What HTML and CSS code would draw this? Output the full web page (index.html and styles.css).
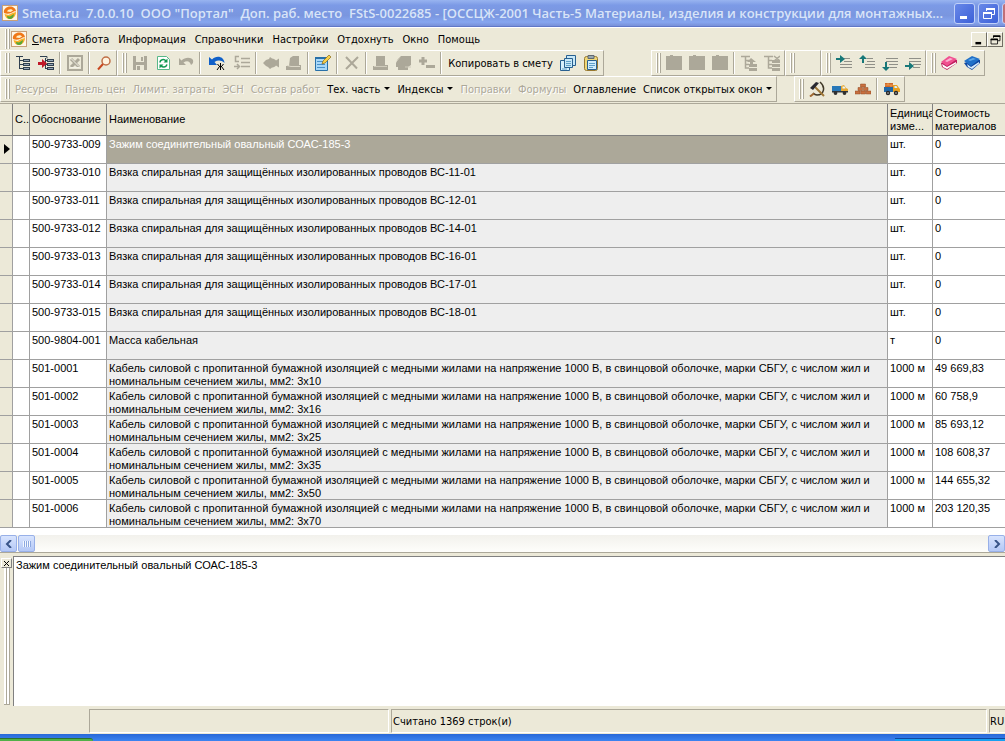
FILE: index.html
```html
<!DOCTYPE html>
<html lang="ru">

<head>
    <meta charset="UTF-8">
    <meta name="viewport" content="width=device-width, initial-scale=1.0">
    <title>Smeta.ru</title>
    <link rel="stylesheet" href="styles.css">
</head>

<body>
    <svg class="sprite" aria-hidden="true">
        <symbol id="i-logo" viewBox="0 0 16 16">
            <rect x="0.5" y="0.5" width="15" height="15" fill="#fdf6e8" stroke="#c8a078"/>
            <path d="M2 8C1 4 5 1.500 8 1.500s6 2 6 5c-2-1-3 .5-5 1.500s-5 1-7 0z" fill="#f07818"/>
            <path d="M5 6.500C6 4 9.500 3.500 11 5.500L8.500 7z" fill="#fff0c8"/>
            <path d="M2.500 9l4 1 4-2 3.500-1c0 4-3 7-6 7s-5-2-5.500-5z" fill="#f8b028"/>
            <path d="M5 11l3 .5 4-2.500c0 3-2 5-4 5s-3-1-3-3z" fill="#58a838"/>
        </symbol>
        <symbol id="i-tree" viewBox="0 0 16 16">
            <path d="M1 1.500h7M4.500 2v12M5 5.500h3M5 9.500h3M5 13.500h3" stroke="#304050" fill="none"/>
            <path d="M8 4h7v3H8zM8 8h7v3H8zM8 12h7v3H8z" fill="#304050"/>
            <path d="M9 5.500h5M9 9.500h5M9 13.500h5" stroke="#98a8b8"/>
        </symbol>
        <symbol id="i-tree-in" viewBox="0 0 16 16">
            <path d="M2 1.500h7v2M7.500 5.500h2M7.500 9.500h2M7.500 13.500h2M7.500 3v11" stroke="#304050" fill="none"/>
            <path d="M9 4h7v3H9zM9 8h7v3H9zM9 12h7v3H9z" fill="#304050"/>
            <path d="M10 5.500h5M10 9.500h5M10 13.500h5" stroke="#98a8b8"/>
            <path d="M0 7h4V4l5 4.500L4 13v-3H0z" fill="#c01828"/>
        </symbol>
        <symbol id="i-excel" viewBox="0 0 16 16">
            <rect x="1" y="1" width="14" height="14" fill="none" stroke="#aca899" stroke-width="2"/>
            <path d="M4 4l8 8M12 4l-8 8" stroke="#aca899" stroke-width="3"/>
            <path d="M4 3.500l8 8M3.500 12.500h9" stroke="#f4f2e8"/>
        </symbol>
        <symbol id="i-find" viewBox="0 0 16 16">
            <circle cx="10" cy="6" r="4" fill="#fff4e0" stroke="#c07048" stroke-width="1.500"/>
            <path d="M7 9l-5 5.500" stroke="#c84820" stroke-width="2"/>
        </symbol>
        <symbol id="i-save" viewBox="0 0 16 16">
            <path d="M1 1h14v14H1z" fill="#aca899"/>
            <path d="M4 1h8v6H4zM4 10h8v5H4z" fill="#ece9d8"/>
            <path d="M9 2h2v4H9zM5 11h3v4H5z" fill="#aca899"/>
        </symbol>
        <symbol id="i-refresh" viewBox="0 0 16 16">
            <path d="M2.500 1.500h9l3 3v10h-12z" fill="#fff" stroke="#58b888"/>
            <path d="M5 7.500c0-3 4-4 6-1.500M12 9.500c-1 3-4.500 3.500-6 1" stroke="#109850" stroke-width="1.500" fill="none"/>
            <path d="M12.500 3.500v4h-4zM4.500 13.500v-4h4z" fill="#109850"/>
        </symbol>
        <symbol id="i-undo-off" viewBox="0 0 16 16">
            <path d="M1 3v7h7L5.500 7.500C9 5 12 6 13 10c2-1 2.500-3 2-5-2-3-8-3-11.500.5z" fill="#aca899"/>
        </symbol>
        <symbol id="i-undo" viewBox="0 0 16 16">
            <path d="M0 2v8h8L5.500 7C9 5 12 5 15.500 8 15 1 7 0 3 4.500z" fill="#1060c8"/>
            <path d="M11.500 8v7M8.500 9l2 2.500L8 15M14.500 9l-2 2.500L15 15M10 11.500h3" stroke="#000" fill="none"/>
        </symbol>
        <symbol id="i-cbr" viewBox="0 0 16 16">
            <path d="M5 1.500H1.500v5H5M7 3.500h9M7 7.500h9M7 11.500h9M0 11.500h5M3 9l2.500 2.500L3 14" stroke="#aca899" stroke-width="1.500" fill="none"/>
        </symbol>
        <symbol id="i-fish" viewBox="0 0 16 16">
            <path d="M0 8l3-3 3-1 1-2 2 1.500c2 0 3 1 4 2l3-2v9l-3-2c-1 1.500-3 2-4 2L7 14l-2-2-2-1z" fill="#aca899"/>
        </symbol>
        <symbol id="i-hat" viewBox="0 0 16 16">
            <path d="M4 3l3-2h6v9h2v5H0v-4h3z" fill="#aca899"/>
            <path d="M1 10.500l4 1h9" stroke="#dcd8c8" fill="none"/>
        </symbol>
        <symbol id="i-edit" viewBox="0 0 16 16">
            <path d="M.5 2.500h12v13H.5z" fill="#a8d8f8" stroke="#2870a8"/>
            <path d="M0 2h13v2H0z" fill="#2870a8"/>
            <path d="M2 6.500h6M2 9.500h8M2 12.500h8" stroke="#4890c8"/>
            <path d="M7 9l1-3 6-6 2 2-6 6z" fill="#f8d048" stroke="#886818" stroke-width=".7"/>
        </symbol>
        <symbol id="i-del" viewBox="0 0 16 16">
            <path d="M2 2l11 11.500M14 2L2 14" stroke="#aca899" stroke-width="2" fill="none"/>
        </symbol>
        <symbol id="i-press" viewBox="0 0 16 16">
            <path d="M3 1h9v9h3v5H0v-4h3z" fill="#aca899"/>
            <path d="M1 11.500h13" stroke="#d0ccbc"/>
        </symbol>
        <symbol id="i-hand" viewBox="0 0 16 16">
            <path d="M5 1h10v9l-3 2v3H2v-3H0V8l2-4z" fill="#aca899"/>
            <path d="M1 6l3-4M9 12h6" stroke="#d0ccbc"/>
        </symbol>
        <symbol id="i-plusminus" viewBox="0 0 16 16">
            <path d="M0 6h8M4 2v8M7 11.500h9" stroke="#aca899" stroke-width="3"/>
        </symbol>
        <symbol id="i-copy" viewBox="0 0 16 16">
            <path d="M6.500.5h9v10h-9z" fill="#c8e8f8" stroke="#286090"/>
            <path d="M.5 5.500h9v10h-9z" fill="#d8f0fc" stroke="#286090"/>
            <path d="M4.500 3.500h8v9h-8z" fill="#c8e8f8" stroke="#286090"/>
            <path d="M6 6.500h5M6 8.500h5M6 10.500h5M2 14h5" stroke="#60a0c8"/>
        </symbol>
        <symbol id="i-paste" viewBox="0 0 16 16">
            <rect x="1.500" y="1.500" width="13" height="14" rx="2" fill="#f0d878" stroke="#987830"/>
            <path d="M5 .5h6v3H5z" fill="#98a8b0" stroke="#606870"/>
            <path d="M4.500 5.500h9v9h-9z" fill="#d0ecfc" stroke="#286090"/>
            <path d="M6 8.500h6M6 10.500h6M6 12.500h4" stroke="#60a0c8"/>
        </symbol>
        <symbol id="i-block" viewBox="0 0 16 16">
            <path d="M0 1h4V0h3v1h9v14H0z" fill="#aca899"/>
        </symbol>
        <symbol id="i-tree-up" viewBox="0 0 16 16">
            <path d="M0 1.500h9M4.500 2v11H8M5 9.500h3M5 5.500h3" stroke="#aca899" stroke-width="1.500" fill="none"/>
            <path d="M10 3l-4 4h3v2h3V7h3zM8 9h8v3H8zM8 13h8v3H8z" fill="#aca899"/>
        </symbol>
        <symbol id="i-tree-x" viewBox="0 0 16 16">
            <path d="M0 1.500h9M4.500 2v11H8M5 9.500h3M5 5.500h3M10 1l6 5M16 1l-6 5" stroke="#aca899" stroke-width="1.500" fill="none"/>
            <path d="M8 5h8v3H8zM8 9h8v3H8zM8 13h8v3H8z" fill="#aca899"/>
        </symbol>
        <symbol id="i-ind1" viewBox="0 0 16 16">
            <path d="M8 3.500h6M8 6.500h8M4 9.500h12M4 12.500h12" stroke="#909088"/>
            <path d="M0 3h4V0l5 4-5 4V5H0z" fill="#187878"/>
        </symbol>
        <symbol id="i-ind2" viewBox="0 0 16 16">
            <path d="M8 3.500h6M8 6.500h8M6 9.500h10M6 12.500h10" stroke="#909088"/>
            <path d="M3 8V4H0l4-4 4 4H5v4z" fill="#187878"/>
        </symbol>
        <symbol id="i-ind3" viewBox="0 0 16 16">
            <path d="M4 3.500h12M4 6.500h12M7 9.500h9M8 12.500h7" stroke="#909088"/>
            <path d="M3 7v5H0l4 4 4-4H5V7z" fill="#187878"/>
        </symbol>
        <symbol id="i-ind4" viewBox="0 0 16 16">
            <path d="M4 3.500h12M4 6.500h12M8 9.500h8M8 12.500h7" stroke="#909088"/>
            <path d="M0 10h4V7l5 4-5 4v-3H0z" fill="#187878"/>
        </symbol>
        <symbol id="i-book-pink" viewBox="0 0 16 16">
            <path d="M0 8l10-3 6 0v3L6 15 1 12z" fill="#c02060"/>
            <path d="M1 9l5 3 9-5v1.500L6 14l-4-2z" fill="#fff"/>
            <path d="M0 7l8-6 8 3-10 7z" fill="#f05090"/>
            <path d="M4 6l5-3 3 1-6 3z" fill="#fcb0d0"/>
        </symbol>
        <symbol id="i-book-blue" viewBox="0 0 16 16">
            <path d="M0 8l10-3 6 0v3L8 15 3 12z" fill="#1048a0"/>
            <path d="M3 9l4 3 8-5v1.500L8 14l-4-2z" fill="#d8ecfc"/>
            <path d="M0 6l8-5 8 3-9 7z" fill="#2070c8"/>
            <path d="M4 5l5-2 3 1-6 2z" fill="#60a8e8"/>
        </symbol>
        <symbol id="i-sickle" viewBox="0 0 16 16">
            <path d="M11 1c6 5 4 13-3 13-2 0-3-1-4-2" stroke="#403828" stroke-width="1.500" fill="none"/>
            <path d="M5 12.500L1 15.500" stroke="#a06830" stroke-width="2"/>
            <path d="M5 5l10 10" stroke="#a07838" stroke-width="2"/>
            <path d="M1 7l6-6 3 1-6 7z" fill="#282830"/>
        </symbol>
        <symbol id="i-truck" viewBox="0 0 16 16">
            <path d="M0 5h9v5H0z" fill="#2878b8"/>
            <path d="M9 5l3-1 2 3 2 1v3H9z" fill="#e8a830"/>
            <path d="M10.500 5.500h2l1 2h-3z" fill="#e8f4fc"/>
            <path d="M0 10h16v1.500H0z" fill="#303840"/>
            <circle cx="3.500" cy="12" r="1.900" fill="#303030"/>
            <circle cx="12.500" cy="12" r="1.900" fill="#303030"/>
        </symbol>
        <symbol id="i-bricks" viewBox="0 0 16 16">
            <path d="M5.500 3h5v3h-5zM3 6.500h4.500v3H3zM8.500 6.500H13v3H8.500zM0 10h5v3H0zM5.700 10h4.800v3H5.700zM11.200 10H16v3h-4.800z" fill="#c87040" stroke="#904820" stroke-width=".5"/>
        </symbol>
        <symbol id="i-truck-full" viewBox="0 0 16 16">
            <path d="M1 2h8v4H1z" fill="#d06828"/>
            <path d="M1 4h8M4 2v2M7 4v2" stroke="#f8b060" stroke-width=".7"/>
            <path d="M0 6h9v5H0z" fill="#2068a8"/>
            <path d="M9 4h4l2 3 1 1v3H9z" fill="#e8a020"/>
            <path d="M10.500 5h2l1 2h-3z" fill="#d8f0fc"/>
            <circle cx="4" cy="12" r="2.200" fill="#282828"/>
            <circle cx="12" cy="12" r="2.200" fill="#282828"/>
            <circle cx="4" cy="12" r=".8" fill="#c8c8c8"/>
            <circle cx="12" cy="12" r=".8" fill="#c8c8c8"/>
        </symbol>
        <symbol id="i-min" viewBox="0 0 16 16">
            <path d="M3 11h7v3H3z" fill="currentColor"/>
        </symbol>
        <symbol id="i-restore" viewBox="0 0 16 16">
            <path d="M5.500 6V3.500h8v6H11M2.500 7.500h8v6h-8z" fill="none" stroke="currentColor"/>
            <path d="M5 3h9v2H5zM2 7h9v2H2z" fill="currentColor"/>
        </symbol>
    </svg>

    <header class="titlebar">
        <svg class="icon"><use href="#i-logo"/></svg>
        <h1 class="title">Smeta.ru  7.0.0.10  ООО "Портал"  Доп. раб. место  FStS-0022685 - [ОССЦЖ-2001 Часть-5 Материалы, изделия и конструкции для монтажных...</h1>
        <div class="window-buttons">
            <button class="win-btn" aria-label="Свернуть"><svg class="icon"><use href="#i-min"/></svg></button>
            <button class="win-btn" aria-label="Восстановить"><svg class="icon"><use href="#i-restore"/></svg></button>
            <button class="win-btn close" aria-label="Закрыть"></button>
        </div>
    </header>

    <nav class="menubar">
        <span class="handle"></span>
        <svg class="icon"><use href="#i-logo"/></svg>
        <button class="menu-item"><u>С</u>мета</button>
        <button class="menu-item">Работа</button>
        <button class="menu-item">Информация</button>
        <button class="menu-item">Справочники</button>
        <button class="menu-item">Настройки</button>
        <button class="menu-item">Отдохнуть</button>
        <button class="menu-item">Окно</button>
        <button class="menu-item">Помощь</button>
        <div class="child-buttons">
            <button class="child-btn" aria-label="Свернуть окно"><svg class="icon"><use href="#i-min"/></svg></button>
            <button class="child-btn" aria-label="Восстановить окно"><svg class="icon"><use href="#i-restore"/></svg></button>
        </div>
    </nav>

    <div class="toolbar-row">
        <div class="toolbar">
            <span class="handle"></span>
            <button class="tool" aria-label="Дерево"><svg class="icon"><use href="#i-tree"/></svg></button>
            <button class="tool" aria-label="Вставить в дерево"><svg class="icon"><use href="#i-tree-in"/></svg></button>
            <span class="sep"></span>
            <button class="tool" aria-label="Excel" disabled><svg class="icon"><use href="#i-excel"/></svg></button>
            <span class="sep"></span>
            <button class="tool" aria-label="Найти"><svg class="icon"><use href="#i-find"/></svg></button>
        </div>
        <div class="toolbar">
            <span class="handle"></span>
            <button class="tool" aria-label="Сохранить" disabled><svg class="icon"><use href="#i-save"/></svg></button>
            <button class="tool" aria-label="Обновить"><svg class="icon"><use href="#i-refresh"/></svg></button>
            <button class="tool" aria-label="Отменить" disabled><svg class="icon"><use href="#i-undo-off"/></svg></button>
            <span class="sep"></span>
            <button class="tool wide" aria-label="Журнал отмены"><svg class="icon"><use href="#i-undo"/></svg></button>
            <button class="tool" aria-label="Строка" disabled><svg class="icon"><use href="#i-cbr"/></svg></button>
            <span class="sep"></span>
            <button class="tool" aria-label="Материалы" disabled><svg class="icon"><use href="#i-fish"/></svg></button>
            <button class="tool" aria-label="Машины" disabled><svg class="icon"><use href="#i-hat"/></svg></button>
            <span class="sep"></span>
            <button class="tool" aria-label="Изменить"><svg class="icon"><use href="#i-edit"/></svg></button>
            <span class="sep"></span>
            <button class="tool" aria-label="Удалить" disabled><svg class="icon"><use href="#i-del"/></svg></button>
            <span class="sep"></span>
            <button class="tool" aria-label="Группа" disabled><svg class="icon"><use href="#i-press"/></svg></button>
            <button class="tool" aria-label="Выбор" disabled><svg class="icon"><use href="#i-hand"/></svg></button>
            <button class="tool" aria-label="Плюс минус" disabled><svg class="icon"><use href="#i-plusminus"/></svg></button>
            <span class="sep"></span>
            <button class="text-tool copy-text">Копировать в смету</button>
            <button class="tool" aria-label="Копировать"><svg class="icon"><use href="#i-copy"/></svg></button>
            <button class="tool" aria-label="Вставить"><svg class="icon"><use href="#i-paste"/></svg></button>
        </div>
        <div class="toolbar levels">
            <span class="handle"></span>
            <button class="tool" aria-label="Уровень 1" disabled><svg class="icon"><use href="#i-block"/></svg></button>
            <button class="tool" aria-label="Уровень 2" disabled><svg class="icon"><use href="#i-block"/></svg></button>
            <button class="tool" aria-label="Уровень 3" disabled><svg class="icon"><use href="#i-block"/></svg></button>
            <span class="sep"></span>
            <button class="tool" aria-label="Поднять" disabled><svg class="icon"><use href="#i-tree-up"/></svg></button>
            <button class="tool" aria-label="Убрать" disabled><svg class="icon"><use href="#i-tree-x"/></svg></button>
        </div>
        <div class="toolbar empty">
            <span class="handle"></span>
        </div>
        <div class="toolbar">
            <span class="handle"></span>
            <button class="tool" aria-label="Вправо сверху"><svg class="icon"><use href="#i-ind1"/></svg></button>
            <button class="tool" aria-label="Вверх"><svg class="icon"><use href="#i-ind2"/></svg></button>
            <button class="tool" aria-label="Вниз"><svg class="icon"><use href="#i-ind3"/></svg></button>
            <button class="tool" aria-label="Вправо снизу"><svg class="icon"><use href="#i-ind4"/></svg></button>
        </div>
        <div class="toolbar">
            <span class="handle"></span>
            <button class="tool" aria-label="Розовая книга"><svg class="icon"><use href="#i-book-pink"/></svg></button>
            <button class="tool" aria-label="Синяя книга"><svg class="icon"><use href="#i-book-blue"/></svg></button>
        </div>
    </div>

    <div class="toolbar-row">
        <div class="toolbar">
            <span class="handle"></span>
            <button class="text-tool" disabled>Ресурсы</button>
            <button class="text-tool" disabled>Панель цен</button>
            <button class="text-tool" disabled>Лимит. затраты</button>
            <button class="text-tool" disabled>ЭСН</button>
            <button class="text-tool" disabled>Состав работ</button>
            <button class="text-tool drop">Тех. часть</button>
            <button class="text-tool drop">Индексы</button>
            <button class="text-tool" disabled>Поправки</button>
            <button class="text-tool" disabled>Формулы</button>
            <button class="text-tool">Оглавление</button>
            <button class="text-tool drop">Список открытых окон</button>
        </div>
        <div class="toolbar kinds">
            <span class="handle"></span>
            <button class="tool" aria-label="Труд"><svg class="icon"><use href="#i-sickle"/></svg></button>
            <button class="tool" aria-label="Транспорт"><svg class="icon"><use href="#i-truck"/></svg></button>
            <button class="tool" aria-label="Кирпич"><svg class="icon"><use href="#i-bricks"/></svg></button>
            <span class="sep"></span>
            <button class="tool" aria-label="Перевозка"><svg class="icon"><use href="#i-truck-full"/></svg></button>
        </div>
    </div>

    <main class="grid-box">
        <table class="grid">
            <colgroup>
                <col class="c-mark">
                <col class="c-state">
                <col class="c-code">
                <col>
                <col class="c-unit">
                <col class="c-cost">
            </colgroup>
            <thead>
                <tr>
                    <th></th>
                    <th>С..</th>
                    <th>Обоснование</th>
                    <th>Наименование</th>
                    <th>Единица изме...</th>
                    <th>Стоимость материалов</th>
                </tr>
            </thead>
            <tbody id="rows"></tbody>
        </table>
        <div class="hscroll">
            <button class="scroll-btn" aria-label="Влево"><svg class="arrow" viewBox="0 0 8 8"><path d="M6 0L2 4l4 4"/></svg></button>
            <div class="thumb"></div>
            <button class="scroll-btn right" aria-label="Вправо"><svg class="arrow" viewBox="0 0 8 8"><path d="M2 0l4 4-4 4"/></svg></button>
        </div>
    </main>

    <section class="memo">
        <div class="memo-side">
            <button class="memo-close" aria-label="Закрыть панель"><svg viewBox="0 0 7 7"><path d="M1 1l5 5M6 1L1 6"/></svg></button>
            <span class="memo-grip"></span>
        </div>
        <textarea class="memo-text" aria-label="Наименование" spellcheck="false">Зажим соединительный овальный СОАС-185-3</textarea>
    </section>

    <footer class="statusbar">
        <div class="status first"></div>
        <div class="status middle">Считано 1369 строк(и)</div>
        <div class="status lang">RU</div>
    </footer>
    <div class="taskbar">
        <div class="start"></div>
        <div class="tray"></div>
    </div>

    <script>
        const clamp = n => "Вязка спиральная для защищённых изолированных проводов ВС-" + n + "-01";
        const cable = n => "Кабель силовой с пропитанной бумажной изоляцией с медными жилами на напряжение 1000 В, в свинцовой оболочке, марки СБГУ, с числом жил и номинальным сечением жилы, мм2: 3х" + n;

        const rows = [
            ["500-9733-009", "Зажим соединительный овальный СОАС-185-3", "шт.", "0"],
            ["500-9733-010", clamp(11), "шт.", "0"],
            ["500-9733-011", clamp(12), "шт.", "0"],
            ["500-9733-012", clamp(14), "шт.", "0"],
            ["500-9733-013", clamp(16), "шт.", "0"],
            ["500-9733-014", clamp(17), "шт.", "0"],
            ["500-9733-015", clamp(18), "шт.", "0"],
            ["500-9804-001", "Масса кабельная", "т", "0"],
            ["501-0001", cable(10), "1000 м", "49 669,83"],
            ["501-0002", cable(16), "1000 м", "60 758,9"],
            ["501-0003", cable(25), "1000 м", "85 693,12"],
            ["501-0004", cable(35), "1000 м", "108 608,37"],
            ["501-0005", cable(50), "1000 м", "144 655,32"],
            ["501-0006", cable(70), "1000 м", "203 120,35"]
        ];

        const tbody = document.getElementById("rows");
        rows.forEach((row, i) => {
            const tr = tbody.insertRow();
            if (i === 0) tr.className = "selected";
            ["", "", ...row].forEach(text => {
                const box = document.createElement("div");
                box.className = "cell";
                box.textContent = text;
                tr.insertCell().appendChild(box);
            });
        });
    </script>
</body>

</html>
```
FILE: styles.css
```css
* {
    box-sizing: border-box;
}

body {
    margin: 0;
    min-height: 100vh;
    display: flex;
    flex-direction: column;
    overflow: hidden;
    background-color: #ece9d8;
    color: #000;
    font-family: "DejaVu Sans Condensed", "DejaVu Sans", sans-serif;
    font-size: 11px;
    line-height: 13px;
}

button {
    flex: none;
    margin: 0;
    padding: 0;
    border: none;
    background: none;
    color: inherit;
    font: inherit;
    white-space: nowrap;
}

.sprite {
    position: absolute;
    width: 0;
    height: 0;
}

.icon {
    display: block;
    flex: none;
    width: 16px;
    height: 16px;
}

/* title */
.titlebar {
    display: flex;
    align-items: center;
    height: 27px;
    padding-left: 2px;
    border-bottom: 1px solid #6078c8;
    background: linear-gradient(#98b4f0, #7c9ae6 20%, #7a96df 60%, #86a6f0 85%, #7890d8);
    overflow: hidden;
}

.title {
    flex: 1;
    min-width: 0;
    margin: 0;
    padding-left: 4px;
    color: #d8e4f8;
    font-family: "Open Sans", sans-serif;
    font-size: 13px;
    font-weight: 600;
    line-height: 20px;
    white-space: pre;
    overflow: hidden;
}

.window-buttons {
    display: flex;
    gap: 3px;
    margin-right: -18px;
}

.win-btn {
    display: grid;
    place-items: center;
    width: 21px;
    height: 21px;
    border: 1px solid #c0d0f8;
    border-radius: 3px;
    background: linear-gradient(135deg, #6888e8, #3c60d8);
    color: #fff;
}

.win-btn.close {
    background: #c07078;
}

/* menu */
.menubar {
    display: flex;
    align-items: center;
    height: 23px;
    border-top: 1px solid #fff;
}

.handle {
    flex: none;
    width: 7px;
    height: 20px;
    margin-left: 4px;
    border: 1px solid transparent;
    border-width: 0 1px;
    background: linear-gradient(90deg, #fff 1px, #aca899 1px, #aca899 2px, transparent 2px, transparent 3px, #fff 3px, #fff 4px, #aca899 4px);
    background-clip: padding-box;
}

.menu-item {
    height: 20px;
    padding: 0 4px 0 5px;
}

.child-buttons {
    display: flex;
    margin-left: auto;
    padding-right: 2px;
}

.child-btn {
    display: grid;
    place-items: center;
    width: 16px;
    height: 15px;
    border: 1px solid;
    border-color: #fff #716f64 #716f64 #fff;
}

.child-btn .icon {
    width: 13px;
    height: 13px;
}

/* toolbars */
.toolbar-row {
    display: flex;
    height: 26px;
}

.toolbar {
    display: flex;
    flex: none;
    align-items: center;
    padding-right: 1px;
    border: 1px solid;
    border-color: #fff #aca899 #aca899 #fff;
}

.toolbar .handle {
    margin-left: 3px;
}

.levels {
    margin-left: 47px;
}

.kinds {
    margin-left: 17px;
}

.empty {
    width: 36px;
}

.tool {
    display: grid;
    place-items: center;
    width: 23px;
    height: 22px;
}

.tool.wide {
    width: 27px;
}

.sep {
    flex: none;
    width: 2px;
    height: 22px;
    margin: 0 2px;
    border-left: 1px solid #aca899;
    border-right: 1px solid #fff;
}

.text-tool {
    height: 22px;
    padding: 0 3px 0 4px;
}

.text-tool:disabled {
    color: #aca899;
    text-shadow: 1px 1px #fff;
}

.copy-text {
    width: 112px;
}

.drop::after {
    content: "";
    display: inline-block;
    margin-left: 4px;
    border: 3px solid transparent;
    border-top-color: #000;
    border-bottom: none;
    vertical-align: 3px;
}

/* grid */
.grid-box {
    margin-top: 1px;
    border-top: 1px solid #aca899;
    border-bottom: 1px solid #aca899;
    background-color: #fff;
}

.grid {
    width: 100%;
    table-layout: fixed;
    border-collapse: separate;
    border-spacing: 0;
    font-family: "Liberation Sans", Arial, sans-serif;
}

.c-mark {
    width: 13px;
}

.c-state {
    width: 17px;
}

.c-code {
    width: 77px;
}

.c-unit {
    width: 45px;
}

.c-cost {
    width: 72px;
}

.grid th {
    height: 32px;
    padding: 0 0 0 2px;
    border-right: 1px solid #808080;
    border-bottom: 1px solid #808080;
    background-color: #ece9d8;
    font-weight: normal;
    text-align: left;
    overflow: hidden;
}

.grid td {
    padding: 0;
    border-right: 1px solid #a0a0a0;
    border-bottom: 1px solid #a0a0a0;
    vertical-align: top;
}

.grid th:last-child,
.grid td:last-child {
    border-right: none;
}

.grid td:first-child {
    background-color: #ece9d8;
}

.grid td:nth-child(4) {
    background-color: #eee;
}

.cell {
    height: 27px;
    padding: 2px 0 0 2px;
    overflow: hidden;
}

.grid .selected td:nth-child(4) {
    background-color: #aca899;
    color: #fff;
}

.selected td:first-child .cell::before {
    content: "";
    display: block;
    width: 0;
    margin: 6px 0 0 2px;
    border: 5px solid transparent;
    border-left: 6px solid #000;
    border-right: none;
}

.hscroll {
    display: flex;
    height: 17px;
    margin-top: 7px;
    background: linear-gradient(#f2f1ec, #fefefb);
}

.scroll-btn,
.thumb {
    width: 17px;
    height: 17px;
    border: 1px solid #98b0e8;
    border-radius: 2px;
    background: linear-gradient(#d8e4fe, #b4c8f6);
}

.thumb {
    display: grid;
    place-items: center;
    margin-left: 1px;
}

.thumb::before {
    content: "";
    width: 8px;
    height: 6px;
    background: repeating-linear-gradient(90deg, #f4f8ff 0 1px, #8ca8e0 1px 2px);
}

.scroll-btn.right {
    margin-left: auto;
}

.arrow {
    display: block;
    width: 8px;
    height: 8px;
    margin: 0 auto;
    fill: none;
    stroke: #385488;
    stroke-width: 2;
}

/* memo */
.memo {
    display: flex;
    flex: 1;
    margin-top: 3px;
}

.memo-side {
    display: flex;
    flex-direction: column;
    align-items: center;
    width: 13px;
    padding-top: 2px;
}

.memo-close {
    width: 11px;
    height: 10px;
    border: 1px solid;
    border-color: #fff #808080 #808080 #fff;
}

.memo-close svg {
    display: block;
    width: 7px;
    height: 7px;
    margin: 0 auto;
    stroke: #000;
}

.memo-grip {
    flex: 1;
    width: 6px;
    margin-bottom: 1px;
    border-bottom: 1px solid #aca899;
    background: linear-gradient(90deg, #fff 2px, #aca899 2px, #aca899 3px, #fff 3px, #fff 5px, #aca899 5px);
}

.memo-text {
    flex: 1;
    padding: 2px;
    border: 1px solid #808080;
    border-right: none;
    border-bottom: none;
    outline: none;
    resize: none;
    background-color: #fff;
    font-family: "Liberation Sans", Arial, sans-serif;
    font-size: 11px;
    line-height: 13px;
}

/* status */
.statusbar {
    display: flex;
    gap: 2px;
    height: 28px;
    padding: 3px 0 1px 89px;
}

.status {
    padding-left: 1px;
    border: 1px solid;
    border-color: #aca899 #fff #fff #aca899;
    line-height: 24px;
    white-space: nowrap;
    overflow: hidden;
}

.first {
    width: 300px;
}

.middle {
    flex: 1;
}

.lang {
    width: 16px;
    padding-left: 0;
    border-right: none;
}

.taskbar {
    display: flex;
    justify-content: space-between;
    height: 7px;
    background: linear-gradient(#2868d8, #3c84f0);
}

.start {
    width: 93px;
    margin-top: 4px;
    border-top: 1px solid #2c7030;
    border-radius: 0 3px 0 0;
    background-color: #50b048;
}

.tray {
    width: 110px;
    margin-top: 4px;
    border-top: 1px solid #1048a0;
    background-color: #18a0f0;
}
```
